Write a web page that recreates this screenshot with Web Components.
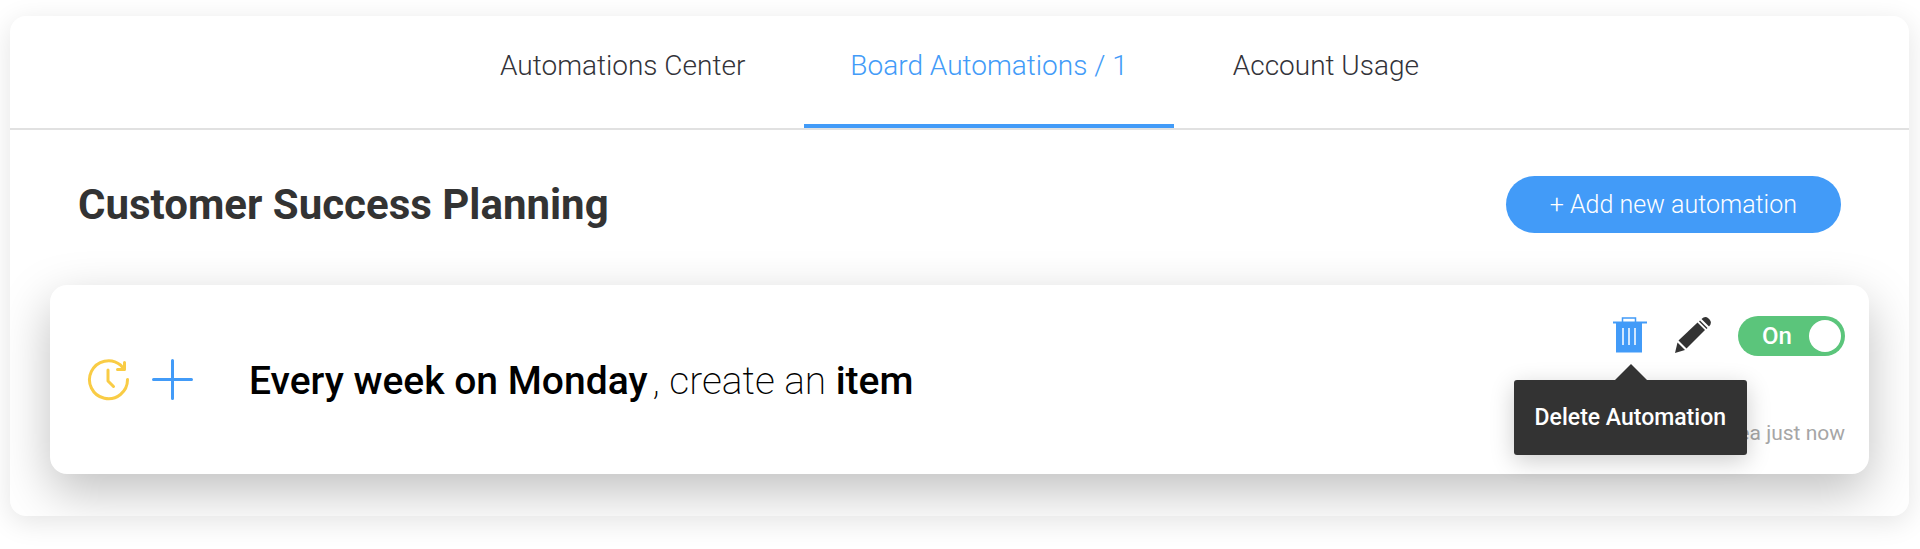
<!DOCTYPE html>
<html lang="en">
<head>
<meta charset="utf-8">
<title>Board Automations</title>
<style>
    body {
        margin: 0;
        background: #fff;
        font-family: Roboto, "Liberation Sans", sans-serif;
        color: #333;
    }
</style>
</head>
<body>
<automations-panel>
    <tab-bar slot="tabs">
        <tab-item>Automations Center</tab-item>
        <tab-item active>Board Automations / 1</tab-item>
        <tab-item>Account Usage</tab-item>
    </tab-bar>
    <board-header>
        Customer Success Planning
        <pill-button slot="action">+ Add new automation</pill-button>
    </board-header>
    <automation-card>
        <b>Every week on Monday</b><span>, create an </span><b>item</b>
        <icon-button slot="actions" icon="trash" label="Delete" active>
            <tool-tip slot="tip">Delete Automation</tool-tip>
        </icon-button>
        <icon-button slot="actions" icon="pencil" label="Edit"></icon-button>
        <toggle-switch slot="actions" on></toggle-switch>
        <time slot="created">ea just now</time>
    </automation-card>
</automations-panel>

<script>
    // Every component only has to give its markup, this puts it in the shadow root
    class BaseElement extends HTMLElement {
        constructor() {
            super();
            this.attachShadow({ mode: "open" });
        }
        connectedCallback() {
            const template = document.createElement("template");
            template.innerHTML = this.getTemplate();
            this.shadowRoot.replaceChildren(template.content.cloneNode(true));
        }
    }

    class AutomationsPanel extends BaseElement {
        getTemplate() {
            return `
                <style>
                :host {
                    display: block;
                    margin: 16px 11px 32px 10px;
                    border-radius: 16px;
                    background: #fff;
                    box-shadow: 0 6px 28px rgba(0, 0, 0, .11);
                    overflow: hidden;
                }
                main {
                    padding: 46px 40px 42px;
                }
                </style>
                <slot name="tabs"></slot>
                <main><slot></slot></main>
            `;
        }
    }

    class TabBar extends BaseElement {
        getTemplate() {
            return `
                <style>
                :host {
                    display: flex;
                    justify-content: center;
                    gap: 13px;
                    border-bottom: 2px solid #e1e1e1;
                }
                </style>
                <slot></slot>
            `;
        }
    }

    class TabItem extends BaseElement {
        getTemplate() {
            return `
                <style>
                :host {
                    display: block;
                }
                button {
                    display: block;
                    padding: 33px 46px 42px;
                    border: 0;
                    border-bottom: 4px solid transparent;
                    background: none;
                    font: 300 28px/33px Roboto, sans-serif;
                    color: #333339;
                    cursor: pointer;
                }
                :host([active]) button {
                    border-color: #429bf8;
                    color: #429bf8;
                }
                </style>
                <button type="button"><slot></slot></button>
            `;
        }
    }

    class BoardHeader extends BaseElement {
        getTemplate() {
            return `
                <style>
                :host {
                    display: flex;
                    align-items: center;
                    justify-content: space-between;
                    padding: 0 28px;
                    margin-bottom: 52px;
                }
                h1 {
                    margin: 0;
                    font: 700 42px/57px Roboto, sans-serif;
                }
                </style>
                <h1><slot></slot></h1>
                <slot name="action"></slot>
            `;
        }
    }

    class PillButton extends BaseElement {
        getTemplate() {
            return `
                <style>
                :host {
                    display: block;
                }
                button {
                    display: block;
                    padding: 0 44px;
                    border: 0;
                    border-radius: 29px;
                    background: #429bf8;
                    font: 300 25px/57px Roboto, sans-serif;
                    color: #fff;
                    cursor: pointer;
                }
                </style>
                <button type="button"><slot></slot></button>
            `;
        }
    }

    class AutomationCard extends BaseElement {
        getTemplate() {
            return `
                <style>
                :host {
                    display: flex;
                    justify-content: space-between;
                    border-radius: 17px;
                    background: #fff;
                    box-shadow: 0 18px 50px rgba(0, 0, 0, .25);
                }
                .rule {
                    display: flex;
                    align-items: center;
                    padding-left: 37px;
                    gap: 21px;
                }
                svg {
                    width: 43px;
                    height: 43px;
                    fill: none;
                    stroke-linecap: round;
                    stroke-linejoin: round;
                }
                p {
                    margin: 2px 0 0 34px;
                    font: 200 39px/46px Roboto, sans-serif;
                    color: #000;
                }
                ::slotted(b) {
                    font-weight: 500;
                }
                ::slotted(span) {
                    margin-left: 5px;
                }
                .side {
                    display: flex;
                    flex-direction: column;
                    align-items: flex-end;
                    justify-content: space-between;
                    gap: 65px;
                    padding: 31px 24px 28px;
                }
                .actions {
                    display: flex;
                    align-items: flex-start;
                    gap: 26px;
                }
                .created {
                    font: 400 21px/25px Roboto, sans-serif;
                    color: #a6a6a6;
                }
                </style>
                <div class="rule">
                    <svg viewBox="0 0 43 43" stroke="#f9cc45" stroke-width="3" aria-hidden="true">
                        <path d="M40.500 21.500A19 19 0 1 1 33.500 7L37 11M37.500 4.500V11.500H30.500"/>
                        <path d="M21 12V23L26.500 28.500"/>
                    </svg>
                    <svg viewBox="0 0 43 43" stroke="#429bf8" stroke-width="3" aria-hidden="true">
                        <path d="M21.500 2.500V40.500M2.500 21.500H40.500"/>
                    </svg>
                    <p><slot></slot></p>
                </div>
                <div class="side">
                    <div class="actions"><slot name="actions"></slot></div>
                    <div class="created"><slot name="created"></slot></div>
                </div>
            `;
        }
    }

    const icons = {
        trash: `
            <path d="M1 6.500H35" fill="none" stroke="currentColor" stroke-width="2"/>
            <path d="M10.500 6V2H23.500V6" fill="none" stroke="currentColor" stroke-width="1.500"/>
            <path d="M4 6H30V36.500H4Z"/>
            <path d="M11 12V29M17 12V29M23 12V29" fill="none" stroke="#fff" stroke-width="1.500"/>
        `,
        pencil: `
            <path d="M0 37L2.500 26.500L10 34Z"/>
            <path d="M3.500 24.500L22.500 6.500L30 14L11.500 32.500Z"/>
            <path d="M24 5.500L25 4.500L32.500 12L31.500 13Z"/>
            <path d="M26.500 3Q30 -.5 33 2L34.500 3.500Q37.500 7 34 10.500Z"/>
        `
    };

    class IconButton extends BaseElement {
        getTemplate() {
            return `
                <style>
                :host {
                    display: block;
                    position: relative;
                    color: #333;
                }
                :host([active]) {
                    color: #429bf8;
                }
                button {
                    display: block;
                    padding: 0;
                    border: 0;
                    background: none;
                    color: inherit;
                    cursor: pointer;
                }
                svg {
                    display: block;
                    width: 37px;
                    height: 38px;
                    fill: currentColor;
                }
                </style>
                <button type="button" aria-label="${this.getAttribute("label")}">
                    <svg viewBox="0 0 37 38" aria-hidden="true">${icons[this.getAttribute("icon")]}</svg>
                </button>
                <slot name="tip"></slot>
            `;
        }
    }

    class ToolTip extends BaseElement {
        getTemplate() {
            return `
                <style>
                :host {
                    position: absolute;
                    top: 64px;
                    right: -98px;
                    z-index: 1;
                    padding: 0 21px;
                    border-radius: 3px;
                    background: #333;
                    box-shadow: 0 6px 24px rgba(0, 0, 0, .2);
                    font: 500 23px/75px Roboto, sans-serif;
                    color: #fff;
                    white-space: nowrap;
                }
                :host::before {
                    content: "";
                    position: absolute;
                    left: 50%;
                    bottom: 100%;
                    margin-left: -15px;
                    border: 16px solid transparent;
                    border-top: 0;
                    border-bottom-color: #333;
                }
                </style>
                <slot></slot>
            `;
        }
    }

    class ToggleSwitch extends BaseElement {
        getTemplate() {
            return `
                <style>
                :host {
                    display: block;
                }
                label {
                    display: flex;
                    align-items: center;
                    justify-content: space-between;
                    box-sizing: border-box;
                    width: 107px;
                    height: 40px;
                    padding: 0 4px 0 24px;
                    border-radius: 20px;
                    background: #5bc57b;
                    font: 500 24px/40px Roboto, sans-serif;
                    color: #fff;
                    cursor: pointer;
                }
                input {
                    appearance: none;
                    width: 32px;
                    height: 32px;
                    margin: 0;
                    border-radius: 50%;
                    background: #fff;
                }
                </style>
                <label>On<input type="checkbox" role="switch" ${this.hasAttribute("on") ? "checked" : ""}></label>
            `;
        }
    }

    customElements.define("automations-panel", AutomationsPanel);
    customElements.define("tab-bar", TabBar);
    customElements.define("tab-item", TabItem);
    customElements.define("board-header", BoardHeader);
    customElements.define("pill-button", PillButton);
    customElements.define("automation-card", AutomationCard);
    customElements.define("icon-button", IconButton);
    customElements.define("tool-tip", ToolTip);
    customElements.define("toggle-switch", ToggleSwitch);
</script>
</body>
</html>
